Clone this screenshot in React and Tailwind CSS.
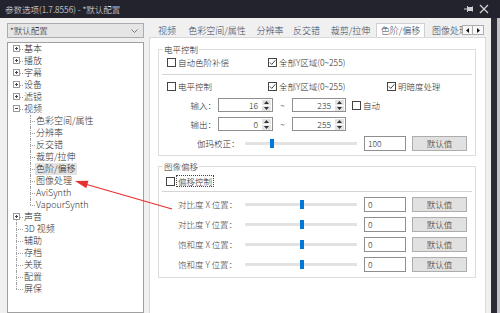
import React from 'react';

const tree = [
  { label: '基本', kind: 'plus' },
  { label: '播放', kind: 'plus' },
  { label: '字幕', kind: 'plus' },
  { label: '设备', kind: 'plus' },
  { label: '滤镜', kind: 'plus' },
  { label: '视频', kind: 'minus' },
  { label: '色彩空间/属性', kind: 'child' },
  { label: '分辨率', kind: 'child' },
  { label: '反交错', kind: 'child' },
  { label: '裁剪/拉伸', kind: 'child' },
  { label: '色阶/偏移', kind: 'child', selected: true },
  { label: '图像处理', kind: 'child' },
  { label: 'AviSynth', kind: 'child' },
  { label: 'VapourSynth', kind: 'child', last: true },
  { label: '声音', kind: 'plus', line: 'down' },
  { label: '3D 视频', kind: 'leaf', line: 'full' },
  { label: '辅助', kind: 'leaf', line: 'full' },
  { label: '存档', kind: 'leaf', line: 'full' },
  { label: '关联', kind: 'leaf', line: 'full' },
  { label: '配置', kind: 'leaf', line: 'full' },
  { label: '屏保', kind: 'leaf', line: 'up' },
];

const tabs = [
  { name: '视频', w: 'w-[30px] justify-center' },
  { name: '色彩空间/属性', w: 'w-[70px] justify-center' },
  { name: '分辨率', w: 'w-[36px] justify-center' },
  { name: '反交错', w: 'w-[37px] justify-center' },
  { name: '裁剪/拉伸', w: 'w-[51px] justify-center' },
  { name: '色阶/偏移', w: 'w-[49px] justify-center', active: true },
  { name: '图像处理', w: 'w-[40px] pl-[7px]' },
];

const offsets = ['对比度 X 位置：', '对比度 Y 位置：', '饱和度 X 位置：', '饱和度 Y 位置：'];

const Expander = ({ open }) => (
  <svg className="absolute left-[5px] top-[2px]" width="7" height="7" viewBox="0 0 7 7">
    <rect x="0.5" y="0.5" width="6" height="6" fill="#fff" stroke="#9a9a9a" />
    <line x1="2" y1="3.5" x2="5" y2="3.5" stroke="#444" />
    {!open && <line x1="3.5" y1="2" x2="3.5" y2="5" stroke="#444" />}
  </svg>
);

const TreeRow = ({ item }) => {
  const dots = 'absolute border-dotted border-[#a0a0a0]';
  return (
    <div className="flex h-[12px] items-center">
      {item.kind === 'child' ? (
        <div className="relative h-full w-[28px] shrink-0">
          <span className={`${dots} left-[22px] top-0 border-l ${item.last ? 'h-[6px]' : 'h-full'}`} />
          <span className={`${dots} left-[22px] top-[6px] w-[5px] border-t`} />
        </div>
      ) : (
        <div className="relative h-full w-[16px] shrink-0">
          {item.line === 'full' && <span className={`${dots} left-[8px] top-0 h-full border-l`} />}
          {item.line === 'down' && <span className={`${dots} left-[8px] top-[6px] h-[6px] border-l`} />}
          {item.line === 'up' && <span className={`${dots} left-[8px] top-0 h-[6px] border-l`} />}
          <span className={`${dots} left-[8px] top-[6px] w-[7px] border-t`} />
          {(item.kind === 'plus' || item.kind === 'minus') && <Expander open={item.kind === 'minus'} />}
        </div>
      )}
      <span className={`leading-[12px] ${item.selected ? 'ml-[-1px] bg-[#e3e3e3] px-[1px]' : ''}`}>{item.label}</span>
    </div>
  );
};

const Check = ({ checked }) => (
  <span className="flex h-[9px] w-[9px] shrink-0 items-center justify-center border border-[#444] bg-white">
    {checked && (
      <svg width="7" height="7" viewBox="0 0 7 7">
        <path d="M0.8 3.5 L2.7 5.4 L6.3 1.3" fill="none" stroke="#333" strokeWidth="0.9" />
      </svg>
    )}
  </span>
);

const CheckItem = ({ checked, label, className = '' }) => (
  <div className={`flex items-center ${className}`}>
    <Check checked={checked} />
    <span className="ml-[2px] leading-none">{label}</span>
  </div>
);

const SpinBox = ({ value, className }) => (
  <div className={`flex h-[14px] items-center border border-[#8f8f8f] bg-white ${className}`}>
    <span className="flex-1 pr-[4px] text-right leading-none">{value}</span>
    <div className="mr-[1px] flex h-[11px] w-[9px] flex-col justify-between">
      <span className="flex h-[5px] items-center justify-center bg-[#e3e3e3]">
        <svg width="5" height="3" viewBox="0 0 5 3"><path d="M0 3 L2.5 0 L5 3Z" fill="#333" /></svg>
      </span>
      <span className="flex h-[5px] items-center justify-center bg-[#e3e3e3]">
        <svg width="5" height="3" viewBox="0 0 5 3"><path d="M0 0 L2.5 3 L5 0Z" fill="#333" /></svg>
      </span>
    </div>
  </div>
);

const Slider = ({ pos }) => (
  <div className="relative h-[3px] w-[112px] shrink-0 rounded-[1px] bg-[#e2e2e2]">
    <span className="absolute top-[-3px] h-[9px] w-[4px] bg-[#0078d7]" style={{ left: pos }} />
  </div>
);

const TextBox = ({ value }) => (
  <div className="ml-[7px] flex h-[15px] w-[42px] shrink-0 items-center border border-[#8f8f8f] bg-white pl-[3px] leading-none">
    {value}
  </div>
);

const DefaultButton = () => (
  <div className="ml-[6px] flex h-[15px] w-[55px] shrink-0 items-center justify-center border border-[#adadad] bg-[#e1e1e1] leading-none">
    默认值
  </div>
);

export default function App() {
  return (
    <div className="relative flex h-[313px] w-[500px] flex-col overflow-hidden bg-[#f0f0f0] font-['Noto_Sans_CJK_SC',sans-serif] font-light text-[#2a2a2a]">
      {/* title bar */}
      <div className="flex h-[18px] shrink-0 items-center bg-[#23232e] pl-[5px] pr-[11px] text-[8.5px] text-[#e4e4e4]">
        <span className="flex-1 leading-none">参数选项(1.7.8556) - *默认配置</span>
        <svg width="10" height="8" viewBox="0 0 10 8" className="mr-[5px]">
          <line x1="0" y1="4" x2="3" y2="4" stroke="#cfcfcf" />
          <rect x="3" y="1" width="1" height="6" fill="#cfcfcf" />
          <rect x="4" y="2" width="4" height="4" fill="#cfcfcf" />
          <rect x="8" y="1.5" width="1" height="5" fill="#cfcfcf" />
        </svg>
        <svg width="10" height="10" viewBox="0 0 10 10">
          <path d="M1 1 L9 9 M9 1 L1 9" stroke="#d4d4d4" strokeWidth="1.2" />
        </svg>
      </div>

      <div className="flex min-h-0 flex-1">
        {/* left column */}
        <div className="flex w-[149px] shrink-0 flex-col pl-[7px] pt-[5px]">
          <div className="flex h-[15px] w-[137px] items-center border border-[#acacac] bg-[#e5e5e5] pl-[2px] pr-[5px] text-[8.5px]">
            <span className="flex-1 leading-none">*默认配置</span>
            <svg width="7" height="4" viewBox="0 0 7 4">
              <path d="M0.5 0.5 L3.5 3.5 L6.5 0.5" fill="none" stroke="#777" />
            </svg>
          </div>
          <div className="mt-[4px] w-[137px] flex-1 border border-[#a0a0a0] bg-white text-[9px]">
            {tree.map((item) => (
              <TreeRow key={item.label} item={item} />
            ))}
          </div>
        </div>

        {/* right column */}
        <div className="flex w-[337px] shrink-0 flex-col">
          <div className="flex h-[19px] shrink-0 items-end pl-[3px] pr-[2px] text-[9px] text-[#34465c]">
            <div className="flex h-full flex-1 items-end overflow-hidden">
              {tabs.map((t) =>
                t.active ? (
                  <div
                    key={t.name}
                    className={`relative z-10 mb-[-1px] flex h-[15px] shrink-0 items-center border border-b-0 border-[#d0d0d0] bg-white pb-[1px] ${t.w}`}
                  >
                    <span className="whitespace-nowrap leading-none">{t.name}</span>
                  </div>
                ) : (
                  <div key={t.name} className={`flex h-[13px] shrink-0 items-center ${t.w}`}>
                    <span className="whitespace-nowrap leading-none">{t.name}</span>
                  </div>
                )
              )}
            </div>
            <div className="mb-[2px] flex">
              <div className="flex h-[10px] w-[11px] items-center justify-center border border-[#adadad] bg-[#f7f7f7]">
                <svg width="3" height="5" viewBox="0 0 3 5"><path d="M3 0 L0 2.5 L3 5Z" fill="#111" /></svg>
              </div>
              <div className="flex h-[10px] w-[11px] items-center justify-center border border-l-0 border-[#adadad] bg-[#f7f7f7]">
                <svg width="3" height="5" viewBox="0 0 3 5"><path d="M0 0 L3 2.5 L0 5Z" fill="#111" /></svg>
              </div>
            </div>
          </div>

          <div className="flex-1 border border-b-0 border-[#d9d9d9] bg-white pl-[8px] pt-[5px] text-[8.5px]">
            {/* 电平控制 */}
            <fieldset className="w-[318px] border border-[#dcdcdc]">
              <legend className="ml-[4px] px-[1px] leading-[12px]">电平控制</legend>
              <div className="mt-[1px] flex h-[12px] items-center pl-[8px]">
                <CheckItem className="w-[101px]" label="自动色阶补偿" />
                <CheckItem checked label="全部Y区域(0~255)" />
              </div>
              <div className="mx-[3px] mt-[6px] border-t border-[#d5d5d5]" />
              <div className="mt-[5px] flex h-[12px] items-center pl-[8px]">
                <CheckItem className="w-[101px]" label="电平控制" />
                <CheckItem className="w-[119px]" checked label="全部Y区域(0~255)" />
                <CheckItem checked label="明暗度处理" />
              </div>
              <div className="mt-[6px] flex h-[14px] items-center">
                <span className="w-[57px] text-right leading-none">输入：</span>
                <SpinBox className="ml-[2px] w-[55px]" value="16" />
                <span className="w-[19px] text-center leading-none">~</span>
                <SpinBox className="w-[54px]" value="235" />
                <CheckItem className="ml-[6px]" label="自动" />
              </div>
              <div className="mt-[5px] flex h-[14px] items-center">
                <span className="w-[57px] text-right leading-none">输出：</span>
                <SpinBox className="ml-[2px] w-[55px]" value="0" />
                <span className="w-[19px] text-center leading-none">~</span>
                <SpinBox className="w-[54px]" value="255" />
              </div>
              <div className="mb-[4px] mt-[5px] flex h-[15px] items-center">
                <span className="w-[86px] shrink-0 pl-[38px] leading-none">伽玛校正：</span>
                <Slider pos={25} />
                <TextBox value="100" />
                <DefaultButton />
              </div>
            </fieldset>

            {/* 图像偏移 */}
            <fieldset className="mt-[4px] w-[318px] border border-[#dcdcdc]">
              <legend className="ml-[4px] px-[1px] leading-[12px]">图像偏移</legend>
              <div className="mt-[3px] flex h-[12px] items-center pl-[7px]">
                <Check />
                <span className="ml-[1px] flex h-[12px] items-center border border-dotted border-[#444] px-[1px] leading-none">偏移控制</span>
              </div>
              <div className="mx-[3px] mt-[4px] border-t border-[#d5d5d5]" />
              <div className="flex flex-col gap-[5px] pb-[5px] pt-[5px]">
                {offsets.map((label) => (
                  <div key={label} className="flex h-[15px] items-center">
                    <span className="w-[86px] shrink-0 whitespace-nowrap pl-[19px] leading-none text-[#3a3a3a]">{label}</span>
                    <Slider pos={55} />
                    <TextBox value="0" />
                    <DefaultButton />
                  </div>
                ))}
              </div>
            </fieldset>
          </div>
        </div>

        <div className="w-[5px] shrink-0" />
        <div className="w-[6px] shrink-0 bg-[#2b2b35]" />
        <div className="flex-1 bg-[#c2c2c2]" />
      </div>

      {/* red annotation arrow */}
      <svg className="pointer-events-none absolute left-0 top-0" width="500" height="313" viewBox="0 0 500 313">
        <line x1="172" y1="209" x2="85" y2="184" stroke="#e5312f" strokeWidth="1.2" />
        <path d="M75 181 L88.5 180.8 L86.3 188.2 Z" fill="#e5312f" />
      </svg>
    </div>
  );
}
